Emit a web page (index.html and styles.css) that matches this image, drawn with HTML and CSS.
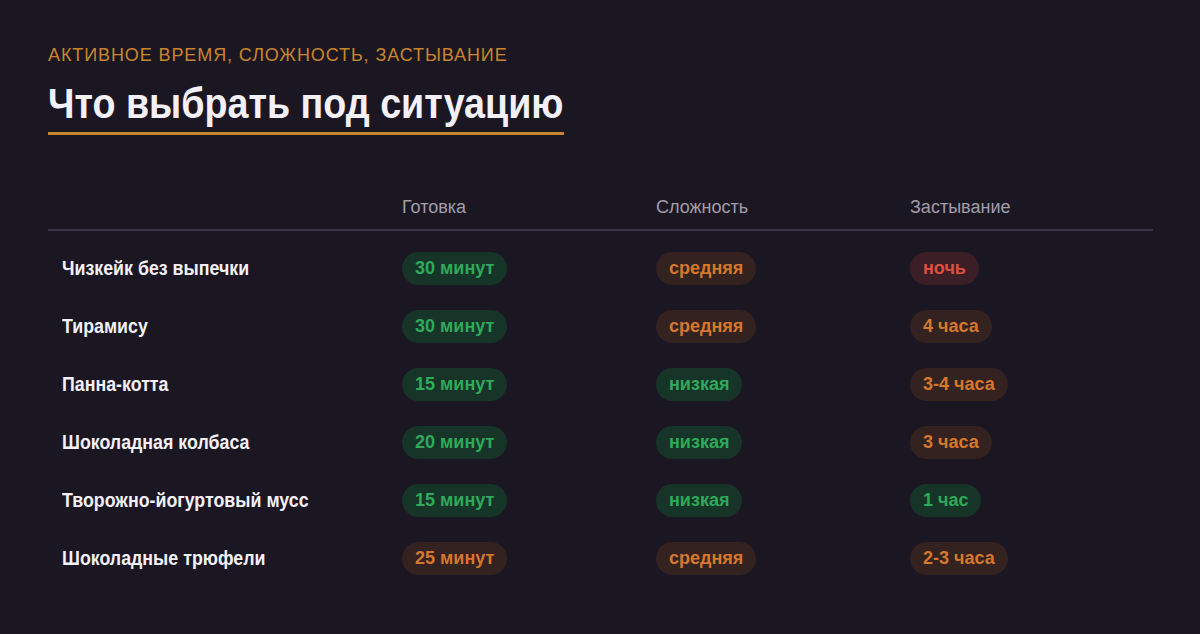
FILE: index.html
```html
<!DOCTYPE html>
<html lang="ru">
<head>
<meta charset="utf-8">
<link rel="stylesheet" href="styles.css">
</head>
<body>
<main class="page">
  <p class="eyebrow">АКТИВНОЕ ВРЕМЯ, СЛОЖНОСТЬ, ЗАСТЫВАНИЕ</p>
  <h1 class="title">Что выбрать под ситуацию</h1>
  <section class="grid">
    <div class="row head">
      <div></div><div>Готовка</div><div>Сложность</div><div>Застывание</div>
    </div>
    <div class="body">
      <div class="row"><div class="name"><span>Чизкейк без выпечки</span></div><div><span class="pill green">30 минут</span></div><div><span class="pill orange">средняя</span></div><div><span class="pill red">ночь</span></div></div>
      <div class="row"><div class="name"><span>Тирамису</span></div><div><span class="pill green">30 минут</span></div><div><span class="pill orange">средняя</span></div><div><span class="pill orange">4 часа</span></div></div>
      <div class="row"><div class="name"><span>Панна-котта</span></div><div><span class="pill green">15 минут</span></div><div><span class="pill green">низкая</span></div><div><span class="pill orange">3-4 часа</span></div></div>
      <div class="row"><div class="name"><span>Шоколадная колбаса</span></div><div><span class="pill green">20 минут</span></div><div><span class="pill green">низкая</span></div><div><span class="pill orange">3 часа</span></div></div>
      <div class="row"><div class="name"><span>Творожно-йогуртовый мусс</span></div><div><span class="pill green">15 минут</span></div><div><span class="pill green">низкая</span></div><div><span class="pill green">1 час</span></div></div>
      <div class="row"><div class="name"><span>Шоколадные трюфели</span></div><div><span class="pill orange">25 минут</span></div><div><span class="pill orange">средняя</span></div><div><span class="pill orange">2-3 часа</span></div></div>
    </div>
  </section>
</main>
</body>
</html>
```
FILE: styles.css
```css
html, body {
  margin: 0;
  padding: 0;
  background: #1b1722;
}
body {
  font-family: "Liberation Sans", Arial, sans-serif;
  color: #f2eff7;
}
.page {
  padding: 44px 47px 0 48px;
}
.eyebrow {
  margin: 0;
  font-size: 18px;
  line-height: 22px;
  letter-spacing: 0.05em;
  color: #c8852e;
}
.title {
  display: inline-block;
  margin: 12px 0 0;
  padding-bottom: 4px;
  font-size: 43px;
  line-height: 50px;
  font-weight: 700;
  color: #f3f0f8;
  border-bottom: 3px solid #c8852e;
  transform: scaleX(0.876);
  transform-origin: left center;
}
.grid {
  margin-top: 61px;
}
.row {
  display: grid;
  grid-template-columns: 340px 254px 254px 1fr;
  align-items: center;
  height: 58px;
}
.row > div {
  padding-left: 14px;
}
.head {
  height: auto;
  padding-bottom: 11px;
  border-bottom: 2px solid #3a3546;
  font-size: 18px;
  line-height: 22px;
  color: #a29dab;
}
.body {
  padding-top: 8px;
}
.name span {
  display: inline-block;
  font-weight: 700;
  font-size: 20px;
  line-height: 24px;
  color: #f3f0f8;
  transform: scaleX(0.89);
  transform-origin: left center;
  white-space: nowrap;
}
.pill {
  display: inline-block;
  height: 33px;
  line-height: 33px;
  padding: 0 13px;
  border-radius: 17px;
  font-weight: 700;
  font-size: 18px;
}
.green { background: #173428; color: #2eaa5b; }
.orange { background: #33221f; color: #d6772c; }
.red { background: #3c1f26; color: #dc503f; }
```
